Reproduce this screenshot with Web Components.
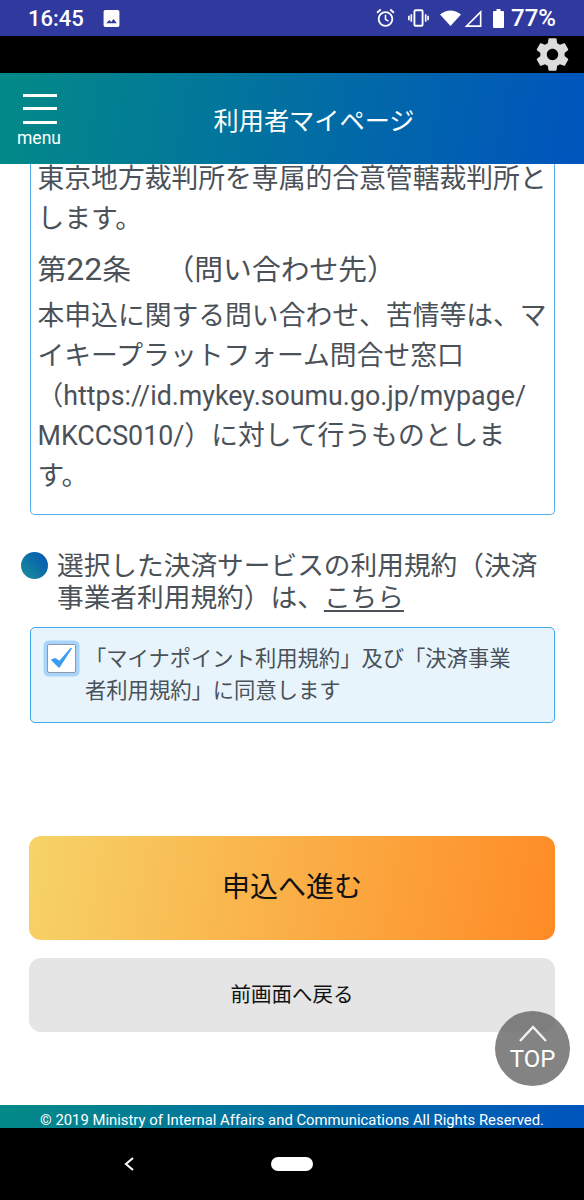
<!DOCTYPE html>
<html lang="ja">
<head>
<meta charset="utf-8">
<style>
  html, body { margin: 0; padding: 0; background: #fff; }
  body { width: 584px; height: 1200px; overflow: hidden; font-family: Roboto, "Noto Sans CJK JP", sans-serif; }
  my-page { display: block; }
</style>
</head>
<body>
<my-page>
  <status-bar></status-bar>
  <settings-strip></settings-strip>
  <app-header></app-header>
  <main-content>
    <terms-box></terms-box>
    <service-note></service-note>
    <agree-box>「マイナポイント利用規約」及び「決済事業者利用規約」に同意します</agree-box>
    <action-buttons></action-buttons>
  </main-content>
  <top-button></top-button>
  <app-footer></app-footer>
  <nav-bar></nav-bar>
</my-page>

<script>
function define(name, html){
    customElements.define(name, class extends HTMLElement{
        constructor(){
            super();
            this.attachShadow({mode: "open"}).innerHTML = html;
        }
    });
}

define("status-bar", `
    <style>
        :host{ display: flex; align-items: center; height: 36px; box-sizing: border-box; background: #303a9e; color: #fff; padding: 0 28px 0 28px; font: 500 22px Roboto, sans-serif; }
        .time{ width: 75px; }
        .right{ margin-left: auto; display: flex; align-items: center; }
        .pct{ font-size: 24px; }
        svg{ display: block; fill: #fff; }
    </style>
    <span class="time">16:45</span>
    <svg width="17" height="19" viewBox="0 0 16 18"><path d="M2 1h12a1.500 1.500 0 0 1 1.500 1.500v13a1.500 1.500 0 0 1-1.500 1.500H2a1.500 1.500 0 0 1-1.500-1.500v-13A1.500 1.500 0 0 1 2 1zm1 12.500h10l-3-4-2.300 2.700-1.700-1.700z" fill-rule="evenodd"/></svg>
    <div class="right">
        <svg width="19" height="20" viewBox="0 0 18 19" style="margin-right:13px"><circle cx="9" cy="10.500" r="6.500" fill="none" stroke="#fff" stroke-width="1.700"/><path d="M9 6.500v4.300l2.800 1.700" fill="none" stroke="#fff" stroke-width="1.500"/><path d="M1 4.500 4.500 1.500M17 4.500 13.500 1.500" stroke="#fff" stroke-width="1.800"/></svg>
        <svg width="21" height="20" viewBox="0 0 19 18" style="margin-right:11px"><rect x="5.800" y="2" width="7.400" height="14" rx="1" fill="none" stroke="#fff" stroke-width="1.700"/><path d="M3 5.500v7M.8 7v4M16 5.500v7M18.200 7v4" stroke="#fff" stroke-width="1.500"/></svg>
        <svg width="21" height="18" viewBox="0 0 21 16" style="margin-right:3px"><path d="M0 4.500Q10.500-3.500 21 4.500L10.500 16z"/></svg>
        <svg width="18" height="19" viewBox="0 0 17 18" style="margin-right:10px"><path d="M16.500 1v16H.5zM15 4.700 4.200 15.500H15z" fill-rule="evenodd"/></svg>
        <svg width="13" height="19" viewBox="0 0 11 19" style="margin-right:6px"><path d="M3.500 0h4v2H10a1 1 0 0 1 1 1v15a1 1 0 0 1-1 1H1a1 1 0 0 1-1-1V3a1 1 0 0 1 1-1h2.500z"/></svg>
        <span class="pct">77%</span>
    </div>
`);

define("settings-strip", `
    <style>
        :host{ display: flex; justify-content: flex-end; align-items: center; height: 37px; background: #000; padding-right: 12.500px; box-sizing: border-box; overflow: hidden; }
        svg{ display: block; flex: none; }
    </style>
    <svg width="39" height="39" viewBox="0 0 24 24"><path fill="#dcdcdc" d="M19.430 12.980c.04-.32.07-.64.07-.98s-.03-.66-.07-.98l2.110-1.650c.19-.15.240-.42.120-.64l-2-3.460c-.12-.22-.39-.3-.61-.22l-2.490 1c-.52-.4-1.080-.73-1.690-.98l-.38-2.650C14.460 2.180 14.250 2 14 2h-4c-.25 0-.46.18-.49.42l-.38 2.650c-.61.25-1.170.59-1.690.98l-2.490-1c-.23-.09-.49 0-.61.22l-2 3.460c-.13.22-.07.49.12.64l2.110 1.650c-.04.32-.07.65-.07.98s.03.66.07.98l-2.110 1.650c-.19.15-.24.42-.12.64l2 3.460c.12.22.39.3.61.22l2.490-1c.52.4 1.080.73 1.690.98l.38 2.650c.03.24.24.42.49.42h4c.25 0 .46-.18.49-.42l.38-2.650c.61-.25 1.170-.59 1.690-.98l2.490 1c.23.09.49 0 .61-.22l2-3.460c.12-.22.07-.49-.12-.64l-2.110-1.650zM12 15.500c-1.930 0-3.500-1.570-3.500-3.500s1.570-3.500 3.500-3.500 3.500 1.570 3.500 3.500-1.570 3.500-3.500 3.500z"/></svg>
`);

define("app-header", `
    <style>
        :host{ display: flex; align-items: center; height: 91px; box-sizing: border-box; color: #fff; background: linear-gradient(100deg, #038a87, #0054bd); }
        .menu{ width: 78px; flex: none; display: flex; flex-direction: column; align-items: center; padding-top: 5px; }
        .bars{ width: 34px; height: 30px; box-sizing: border-box; border-top: 3.500px solid #fff; border-bottom: 3.500px solid #fff; position: relative; margin: 0 0 4px 1px; }
        .bars::after{ content: ""; position: absolute; left: 0; right: 0; top: 9.750px; height: 3.500px; background: #fff; }
        .word{ font: 17.500px/20px Roboto, sans-serif; }
        .title{ flex: 1; text-align: center; font: 25.200px "Noto Sans CJK JP", sans-serif; margin-top: 0; padding-right: 34px; }
    </style>
    <div class="menu"><div class="bars"></div><div class="word">menu</div></div>
    <div class="title">利用者マイページ</div>
`);

define("main-content", `
    <style>
        :host{ display: block; height: 941px; box-sizing: border-box; padding: 0 29px 0 30px; background: #fff; }
    </style>
    <slot></slot>
`);

define("terms-box", `
    <style>
        :host{ display: block; height: 351px; box-sizing: border-box; border: 1.500px solid #55aeea; border-top: 0; border-radius: 0 0 5px 5px; padding: 0 6.500px; color: #4a5158; font: 26.800px/40px "Noto Sans CJK JP", sans-serif; overflow: hidden; white-space: nowrap; }
        p{ margin: 0; height: 40px; }
        .head{ font-size: 28.800px; line-height: 52px; height: 52px; margin-top: 5px; }
        .num{ font: 400 32px Roboto, sans-serif; }
        .gap{ margin-left: 20px; }
        .latin{ font-family: Roboto, sans-serif; }
    </style>
    <p style="margin-top:-7px">東京地方裁判所を専属的合意管轄裁判所と</p>
    <p>します。</p>
    <p class="head">第<span class="num">22</span>条　<span class="gap">（問い合わせ先）</span></p>
    <p>本申込に関する問い合わせ、苦情等は、マ</p>
    <p>イキープラットフォーム問合せ窓口</p>
    <p><span style="margin-left:-1px">（</span><span class="latin">https://id.mykey.soumu.go.jp/mypage/</span></p>
    <p><span class="latin">MKCCS010/</span>）に対して行うものとしま</p>
    <p>す。</p>
`);

define("service-note", `
    <style>
        :host{ display: block; position: relative; margin: 33px 12px 0 -9px; padding-left: 36px; color: #4a5158; font: 26.700px/32px "Noto Sans CJK JP", sans-serif; }
        i{ position: absolute; left: 0; top: 4px; width: 27px; height: 27px; border-radius: 50%; background: linear-gradient(45deg, #1a8f98, #0454b4); }
        u{ text-underline-offset: 3px; }
    </style>
    <i></i>選択した決済サービスの利用規約（決済事業者利用規約）は、<u>こちら</u>
`);

define("agree-box", `
    <style>
        :host{ display: flex; height: 96px; box-sizing: border-box; margin-top: 15px; background: #e8f4fb; border: 1.500px solid #3ea9ec; border-radius: 5px; color: #4a5158; font: 21.300px/32px "Noto Sans CJK JP", sans-serif; padding: 13px 30px 0 14px; }
        .check{ flex: none; width: 27px; height: 27px; background: #fff; border: 1px solid #8a9aa8; box-shadow: 0 0 0 3.500px #a8d4fb; border-radius: 2px; margin: 3px 9px 0 2px; display: flex; }
    </style>
    <div class="check"><svg width="27" height="27" viewBox="0 0 27 27"><path d="M4 15l7 7L23 3.500l-11.500 13.300-4-3z" fill="#3c9cf2" stroke="#3c9cf2" stroke-width="1.500" stroke-linejoin="round"/></svg></div>
    <div class="text"><slot></slot></div>
`);

define("action-buttons", `
    <style>
        :host{ display: flex; flex-direction: column; gap: 18px; margin-top: 113px; margin-left: -1px; }
        div{ display: flex; align-items: center; justify-content: center; box-sizing: border-box; color: #111; font-family: "Noto Sans CJK JP", sans-serif; border-radius: 12px; }
        .go{ height: 104px; font-size: 28px; padding-bottom: 6px; background: linear-gradient(100deg, #f6d368, #ff8b26); }
        .back{ height: 74px; font-size: 20.500px; padding-bottom: 5px; background: #e5e5e5; }
    </style>
    <div class="go">申込へ進む</div>
    <div class="back">前画面へ戻る</div>
`);

define("top-button", `
    <style>
        :host{ display: flex; flex-direction: column; align-items: center; position: absolute; left: 495px; top: 1011px; width: 75px; height: 75px; border-radius: 50%; background: rgba(100,100,100,.8); color: #fff; font: 24px/26px Roboto, sans-serif; }
        svg{ display: block; margin-top: 13px; margin-bottom: 3px; }
    </style>
    <svg width="30" height="19" viewBox="0 0 30 19"><path d="M2 17 15 3l13 14" fill="none" stroke="#f2f2f2" stroke-width="2.400"/></svg>
    <span>TOP</span>
`);

define("app-footer", `
    <style>
        :host{ display: block; height: 23px; box-sizing: border-box; color: #fff; text-align: center; font: 14.850px/31px Roboto, sans-serif; background: linear-gradient(100deg, #038a87, #0054bd); overflow: hidden; white-space: nowrap; }
    </style>
    © 2019 Ministry of Internal Affairs and Communications All Rights Reserved.
`);

define("nav-bar", `
    <style>
        :host{ display: block; position: relative; height: 72px; background: #000; }
        svg{ position: absolute; left: 122px; top: 28px; }
        i{ position: absolute; left: 271px; top: 29px; width: 42px; height: 14px; border-radius: 7px; background: #fff; }
    </style>
    <svg width="14" height="16" viewBox="0 0 14 16"><path d="M11 2 4 8l7 6" fill="none" stroke="#f4f4f4" stroke-width="2.200"/></svg>
    <i></i>
`);
</script>
</body>
</html>
